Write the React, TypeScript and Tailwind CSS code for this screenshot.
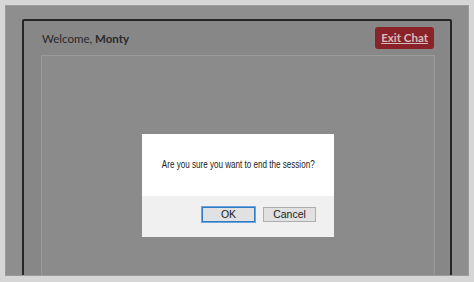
export default function App() {
  return (
    <div className="relative h-[282px] w-[474px] overflow-hidden bg-[#d6d6d6] pt-[5px] pr-[5px] pb-[6px] pl-[5px]">
      <div className="h-full overflow-hidden border border-[#9a9a9a] bg-[#8e8e8e] pt-[13px] pr-[16px] pl-[16px]">
        <div className="flex h-[300px] flex-col rounded-[2px] border-2 border-[#262626] bg-[#878787]">
          {/* header */}
          <div className="flex h-[34px] items-center justify-between pr-[16px] pl-[18px]">
            <span className="pt-[2px] font-['Lato','Liberation_Sans',sans-serif] text-[11.5px] text-[#2a2a2a]">
              Welcome, <span className="font-bold">Monty</span>
            </span>
            <button className="rounded-[3px] bg-[#8a2229] px-[6px] py-[2px] font-['Lato','Liberation_Sans',sans-serif] text-[11.5px] font-bold text-[#d6bcbc] underline">
              Exit Chat
            </button>
          </div>
          {/* chat panel */}
          <div className="mr-[15px] ml-[17px] flex-1 border border-[#9b9b9b] bg-[#8b8b8b]" />
        </div>
      </div>

      {/* confirm dialog */}
      <div className="absolute top-[134px] left-[142px] flex h-[103px] w-[192px] flex-col bg-white font-['Liberation_Sans',Arial,sans-serif] text-[#1a1a1a]">
        <div className="flex h-[62px] items-center justify-center">
          <span className="inline-block scale-x-[0.77] whitespace-nowrap text-[10.5px]">
            Are you sure you want to end the session?
          </span>
        </div>
        <div className="flex flex-1 items-center justify-end gap-[8px] bg-[#f0f0f0] pr-[18px] pb-[4px]">
          <button className="h-[15px] w-[53px] border border-[#2f7bc4] bg-[#e1e1e1] text-[10.5px] leading-none outline outline-1 outline-[#6aa6dc]">
            OK
          </button>
          <button className="h-[15px] w-[53px] border border-[#adadad] bg-[#e1e1e1] text-[10.5px] leading-none">
            Cancel
          </button>
        </div>
      </div>
    </div>
  )
}
